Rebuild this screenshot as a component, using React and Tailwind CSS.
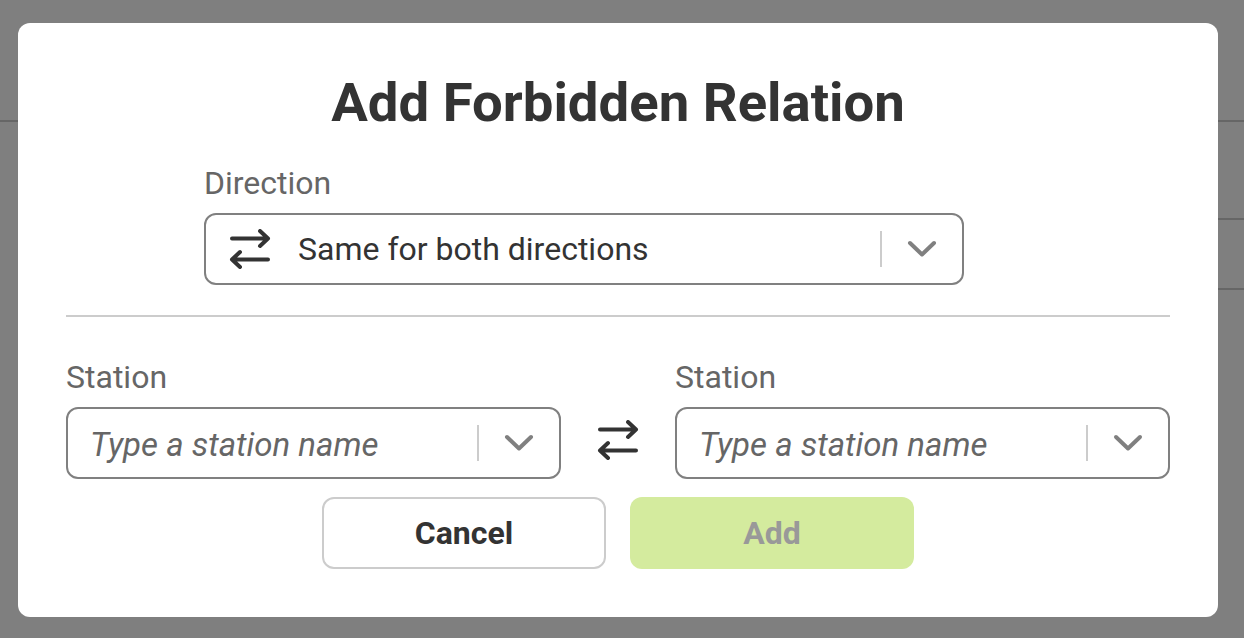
import { useState } from "react";

const SwapIcon = ({ className }) => (
  <svg className={className} viewBox="0 0 42 40" fill="none" stroke="currentColor" strokeWidth="4" strokeLinecap="round" strokeLinejoin="round">
    <path d="M3 9.5h36M31 2l8 7.5-8 7.5" />
    <path d="M39 30.5H3M11 23l-8 7.5 8 7.5" />
  </svg>
);

const Chevron = () => (
  <svg className="w-[30px] h-[18px] text-[#808080]" viewBox="0 0 30 18" fill="none" stroke="currentColor" strokeWidth="4" strokeLinecap="round" strokeLinejoin="round">
    <path d="M3 3l12 11.5L27 3" />
  </svg>
);

const SelectBox = ({ children }) => (
  <div className="flex h-[72px] items-center rounded-[12px] border-2 border-[#808080] bg-white">
    <div className="flex-1 min-w-0 flex items-center">{children}</div>
    <div className="h-[36px] w-[2px] bg-[#ccc]" />
    <div className="w-[80px] flex items-center justify-center">
      <Chevron />
    </div>
  </div>
);

const StationField = () => {
  const [value, setValue] = useState("");
  return (
    <div className="w-[495px]">
      <label className="block text-[32px] leading-[38px] text-[#666] mb-[11px]">Station</label>
      <SelectBox>
        <input
          value={value}
          onChange={(e) => setValue(e.target.value)}
          placeholder="Type a station name"
          className="w-full pl-[22px] pt-[4px] text-[33px] italic text-[#333] outline-none placeholder:text-[#666]"
        />
      </SelectBox>
    </div>
  );
};

export default function App() {
  return (
    <div className="relative h-[638px] overflow-hidden bg-white font-['Roboto',sans-serif]">
      <div className="h-[122px] border-b-2 border-[#ccc]" />
      <div className="h-[98px] ml-[620px] border-b-2 border-[#ccc]" />
      <div className="h-[70px] ml-[620px] border-b-2 border-[#ccc]" />

      <div className="absolute inset-0 pl-[18px] pt-[23px] bg-black/50">
        <div className="w-[1200px] h-[594px] rounded-[12px] bg-white px-[48px] pt-[44px]">
          <h1 className="text-center text-[54.5px] leading-[70px] font-bold text-[#333]">Add Forbidden Relation</h1>

          <div className="w-[760px] ml-[138px] mt-[27px]">
            <label className="block text-[32px] leading-[38px] text-[#666] mb-[11px]">Direction</label>
            <SelectBox>
              <SwapIcon className="ml-[23px] w-[42px] h-[40px] text-[#333]" />
              <span className="ml-[27px] text-[32px] text-[#333]">Same for both directions</span>
            </SelectBox>
          </div>

          <div className="mt-[30px] h-[2px] bg-[#ccc]" />

          <div className="mt-[41px] flex items-end justify-between">
            <StationField />
            <SwapIcon className="w-[42px] h-[40px] mb-[19px] text-[#333]" />
            <StationField />
          </div>

          <div className="mt-[18px] flex justify-center gap-[24px]">
            <button className="w-[284px] h-[72px] rounded-[12px] border-2 border-[#ccc] bg-white text-[32px] font-bold text-[#333]">Cancel</button>
            <button disabled className="w-[284px] h-[72px] rounded-[12px] bg-[#d4eb9e] text-[32px] font-bold text-[#999]">Add</button>
          </div>
        </div>
      </div>
    </div>
  );
}
